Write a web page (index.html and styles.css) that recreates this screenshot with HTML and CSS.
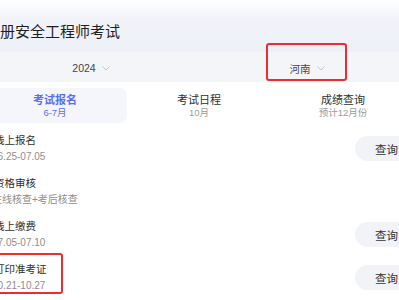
FILE: index.html
```html
<!DOCTYPE html>
<html lang="zh">
<head>
<meta charset="utf-8">
<title>注册安全工程师考试</title>
<link rel="stylesheet" href="styles.css">
</head>
<body>
<div class="page">
  <header class="header">
    <h1 class="title">注册安全工程师考试</h1>
    <div class="filters">
      <div class="filter"><span>2024</span><svg class="chev" width="8" height="5" viewBox="0 0 8 5"><polyline points="0.5,0.5 4,4 7.5,0.5" fill="none" stroke="#c3c6ce" stroke-width="1"/></svg></div>
      <div class="filter"><span>河南</span><svg class="chev" width="8" height="5" viewBox="0 0 8 5"><polyline points="0.5,0.5 4,4 7.5,0.5" fill="none" stroke="#c3c6ce" stroke-width="1"/></svg></div>
    </div>
  </header>
  <nav class="tabs">
    <div class="tab active"><div class="tab-label">考试报名</div><div class="tab-sub">6-7月</div></div>
    <div class="tab"><div class="tab-label">考试日程</div><div class="tab-sub">10月</div></div>
    <div class="tab"><div class="tab-label">成绩查询</div><div class="tab-sub">预计12月份</div></div>
  </nav>
  <ul class="list">
    <li class="item"><div class="info"><div class="item-title">线上报名</div><div class="item-date">06.25-07.05</div></div><button class="btn">查询</button></li>
    <li class="item"><div class="info"><div class="item-title">资格审核</div><div class="item-date">在线核查+考后核查</div></div></li>
    <li class="item"><div class="info"><div class="item-title">线上缴费</div><div class="item-date">07.05-07.10</div></div><button class="btn">查询</button></li>
    <li class="item"><div class="info"><div class="item-title">打印准考证</div><div class="item-date">10.21-10.27</div></div><button class="btn">查询</button></li>
  </ul>
</div>
<div class="mark mark-region"></div>
<div class="mark mark-card"></div>
</body>
</html>
```

FILE: styles.css
```css
* { box-sizing: border-box; }
html, body { margin: 0; padding: 0; }
body {
  width: 399px;
  height: 300px;
  overflow: hidden;
  position: relative;
  background: #fff;
  font-family: "Liberation Sans", "Noto Sans CJK SC", sans-serif;
  color: #333;
}
.page {
  width: 432px;
  margin-left: -17px;
}
.header {
  background: linear-gradient(180deg, #ffffff 0px, #f1f3f9 18px, #eef0f8 52px);
}
.title {
  margin: 0;
  padding: 22px 0 10px 2px;
  font-size: 15px;
  line-height: 20px;
  font-weight: normal;
  color: #1e1e1e;
}
.filters {
  display: grid;
  grid-template-columns: 1fr 1fr;
  height: 30px;
  background: #f4f5f9;
}
.filter {
  display: flex;
  align-items: center;
  justify-content: center;
  gap: 6px;
  padding-top: 2px;
  font-size: 10.5px;
  color: #444;
}
.chev { display: block; }
.tabs {
  display: grid;
  grid-template-columns: repeat(3, 1fr);
  padding-top: 6px;
}
.tab {
  height: 35px;
  padding-top: 5px;
  text-align: center;
  border-radius: 7px;
}
.tab.active { background: #f4f6fb; }
.tab-label {
  font-size: 11px;
  line-height: 14px;
  color: #2f2f2f;
}
.tab-sub {
  font-size: 9.5px;
  line-height: 12px;
  color: #9a9a9a;
}
.tab.active .tab-label { color: #5b6df0; font-weight: bold; }
.tab.active .tab-sub { color: #5b6df0; }
.list {
  list-style: none;
  margin: 0;
  padding: 4px 0 0 9px;
}
.item {
  display: flex;
  align-items: center;
  justify-content: space-between;
  height: 43px;
  padding: 6px 0;
}
.item-title {
  padding-left: 2px;
  font-size: 10.5px;
  line-height: 15px;
  color: #2e2e2e;
}
.item-date {
  margin-top: 2px;
  font-size: 10px;
  line-height: 14px;
  color: #8e8e8e;
}
.btn {
  width: 60px;
  height: 25px;
  padding: 0 0 0 20px;
  border: none;
  border-radius: 13px;
  background: #f2f3f7;
  font-family: inherit;
  font-size: 11.5px;
  color: #333;
  text-align: left;
}
.mark {
  position: absolute;
  border: 2px solid #ef2b2b;
  border-radius: 3px;
}
.mark-region { left: 266px; top: 43px; width: 81px; height: 38px; }
.mark-card { left: -10px; top: 253px; width: 73px; height: 41px; }
```
